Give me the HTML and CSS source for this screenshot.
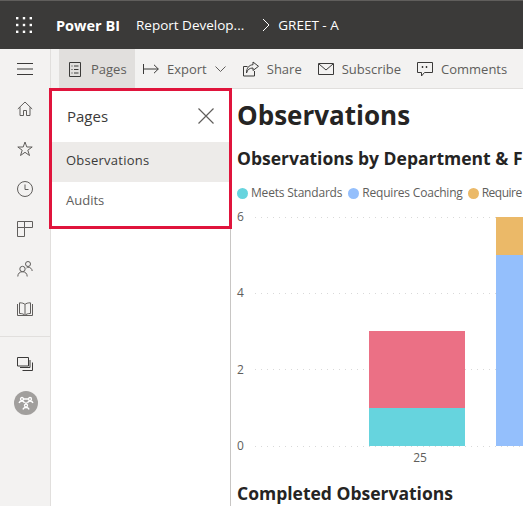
FILE: index.html
```html
<!DOCTYPE html>
<html lang="en">
<head>
  <meta charset="UTF-8" />
  <title>Power BI - GREET - A</title>
  <link rel="stylesheet" href="styles.css">
</head>
<body>
  <header class="topbar">
    <svg class="waffle" width="16" height="16" viewBox="0 0 16 16" fill="#fff">
      <rect x="0" y="0" width="2.4" height="2.4"/><rect x="6.8" y="0" width="2.4" height="2.4"/><rect x="13.6" y="0" width="2.4" height="2.4"/>
      <rect x="0" y="6.8" width="2.4" height="2.4"/><rect x="6.8" y="6.8" width="2.4" height="2.4"/><rect x="13.6" y="6.8" width="2.4" height="2.4"/>
      <rect x="0" y="13.6" width="2.4" height="2.4"/><rect x="6.8" y="13.6" width="2.4" height="2.4"/><rect x="13.6" y="13.6" width="2.4" height="2.4"/>
    </svg>
    <span class="brand">Power BI</span>
    <span class="crumb">Report Develop...</span>
    <svg class="crumb-sep" width="8" height="14" viewBox="0 0 8 14" fill="none" stroke="#fff"><path d="M1 1l6 6-6 6"/></svg>
    <span class="crumb">GREET - A</span>
  </header>

  <div class="layout">
    <nav class="sidenav">
      <div class="nav-item">
        <svg width="16" height="12" viewBox="0 0 16 12" stroke="#3b3a39" fill="none"><path d="M0 .5h16M0 6h16M0 11.5h16"/></svg>
      </div>
      <div class="nav-item">
        <svg width="16" height="16" viewBox="0 0 16 16" stroke="#605e5c" fill="none"><path d="M.8 8L8 1l7.2 7M3 6.2v8.3h3.5v-5h3v5H13V6.2"/></svg>
      </div>
      <div class="nav-item">
        <svg width="16" height="16" viewBox="0 0 16 16" stroke="#605e5c" fill="none"><path d="M8 1l1.8 5h5.4l-4.4 3.2 1.7 5.3L8 11.3l-4.5 3.2 1.7-5.3L.8 6h5.4z"/></svg>
      </div>
      <div class="nav-item">
        <svg width="16" height="16" viewBox="0 0 16 16" stroke="#605e5c" fill="none"><circle cx="8" cy="8" r="7.5"/><path d="M8 3.5V8.500h3.500"/></svg>
      </div>
      <div class="nav-item">
        <svg width="16" height="16" viewBox="0 0 16 16" stroke="#605e5c" fill="none"><path d="M.5.500h15v6h-8v9h-7zM.5 6.500h7M7.500.5v6"/></svg>
      </div>
      <div class="nav-item">
        <svg width="16" height="16" viewBox="0 0 16 16" stroke="#605e5c" fill="none"><circle cx="5.500" cy="8" r="2.700"/><path d="M.8 15.500c0-3 2-4.800 4.700-4.800s4.700 1.800 4.700 4.800"/><circle cx="11" cy="3" r="2.500"/><path d="M9.500 7c.5-.6 1-.8 1.500-.8 2.200 0 4 1.500 4.200 3.800"/></svg>
      </div>
      <div class="nav-item">
        <svg width="16" height="14" viewBox="0 0 16 14" stroke="#605e5c" fill="none"><path d="M.5 2v11.500h15V2M8 2.500v11M2.500 11.500V.8c2.500 0 4.500.5 5.500 1.700 1-1.200 3-1.700 5.500-1.700v10.700c-2.500 0-4.500.5-5.500 2-1-1.500-3-2-5.500-2z"/></svg>
      </div>
      <div class="nav-divider"></div>
      <div class="nav-item">
        <svg width="16" height="14" viewBox="0 0 16 14" stroke="#3b3a39" fill="none"><path d="M.5.500h11v8.500H.5zM13 3v7.500H3M15.500 5.500v8H5.500"/></svg>
      </div>
      <div class="nav-item">
        <div class="avatar">
          <svg width="16" height="14" viewBox="0 0 16 14" stroke="#fff" stroke-width="1.300" fill="none"><circle cx="4" cy="3" r="1.500"/><circle cx="12" cy="3" r="1.500"/><path d="M5.500 3h5M1 7c.5-1.500 1.500-2 3-2s2 .5 2.500 2M9.500 7c.5-1.500 1.500-2 2.500-2 1.500 0 2.500.5 3 2M8 6v2"/><circle cx="8" cy="9.500" r="1.500"/><path d="M5 13.500c.3-1.500 1.500-2 3-2s2.700.5 3 2"/></svg>
        </div>
      </div>
    </nav>

    <div class="main">
      <div class="commandbar">
        <button class="cmd cmd-active">
          <svg width="12" height="15" viewBox="0 0 12 15" stroke="#3b3a39" fill="none"><path d="M.5.500h11v14H.5zM2.500 4h1M5 4h4.500M2.500 7.500h1M5 7.500h4.500M2.500 11h1M5 11h4.500"/></svg>
          <span>Pages</span>
        </button>
        <button class="cmd">
          <svg width="16" height="10" viewBox="0 0 16 10" stroke="#3b3a39" fill="none"><path d="M.5 0v10M1 5h14.300M11 .8L15.300 5 11 9.200"/></svg>
          <span>Export</span>
          <svg class="chev" width="11" height="6" viewBox="0 0 11 6" stroke="#605e5c" fill="none"><path d="M.5.500l5 5 5-5"/></svg>
        </button>
        <button class="cmd">
          <svg width="16" height="16" viewBox="0 0 16 16" stroke="#3b3a39" fill="none"><path d="M11.500 10v5H.5V5.500h4M10 1l5.500 4.300L10 9.500V7C6.500 7 4.500 8.500 3.500 12c0-5 2.500-8 6.500-8.300z"/></svg>
          <span>Share</span>
        </button>
        <button class="cmd">
          <svg width="16" height="12" viewBox="0 0 16 12" stroke="#3b3a39" fill="none"><path d="M.5.500h15v11H.5zM1 1l7 6 7-6"/></svg>
          <span>Subscribe</span>
        </button>
        <button class="cmd">
          <svg width="16" height="15" viewBox="0 0 16 15" stroke="#3b3a39" fill="none"><path d="M.5.500h15v10H7.500l-3 3.500v-3.500h-4z"/><path d="M5.500 4v2M9.500 4v2" stroke-width="1.400"/></svg>
          <span>Comments</span>
        </button>
      </div>

      <div class="workspace">
        <aside class="pages-panel">
          <div class="panel-head">
            <span class="panel-title">Pages</span>
            <svg width="16" height="16" viewBox="0 0 16 16" stroke="#605e5c" stroke-width="1.200" fill="none"><path d="M.5.500l15 15M15.500.5L.5 15.500"/></svg>
          </div>
          <div class="page-item page-item-active">Observations</div>
          <div class="page-item">Audits</div>
        </aside>

        <section class="report">
          <h1>Observations</h1>
          <h2 class="chart-title">Observations by Department &amp; F</h2>
          <div class="legend">
            <span class="legend-item"><i class="dot dot-cyan"></i>Meets Standards</span>
            <span class="legend-item"><i class="dot dot-blue"></i>Requires Coaching</span>
            <span class="legend-item legend-last"><i class="dot dot-orange"></i>Require</span>
          </div>
          <svg class="chart" width="292" height="260" viewBox="0 -4 292 260">
            <g class="grid">
              <path d="M24 7.500H292M24 83.500H292M24 159.500H292M24 236.500H292"/>
            </g>
            <g class="ticks">
              <text x="6" y="11">6</text>
              <text x="6" y="87">4</text>
              <text x="6" y="164">2</text>
              <text x="6" y="240">0</text>
              <text x="189" y="252" text-anchor="middle">25</text>
            </g>
            <rect x="138" y="121" width="96" height="77" fill="#eb7085"/>
            <rect x="138" y="198" width="96" height="38" fill="#66d4de"/>
            <rect x="265" y="7" width="27" height="38" fill="#ebb968"/>
            <rect x="265" y="45" width="27" height="191" fill="#94bffc"/>
          </svg>
          <h2 class="completed">Completed Observations</h2>
        </section>
      </div>
    </div>
  </div>

  <div class="highlight"></div>
</body>
</html>
```

FILE: styles.css
```css
* {
  box-sizing: border-box;
}

html, body {
  height: 100%;
}

body {
  margin: 0;
  overflow: hidden;
  position: relative;
  font-family: "Open Sans", "Noto Sans", sans-serif;
  color: #323130;
  background-color: white;
}

.topbar {
  height: 49px;
  display: flex;
  align-items: center;
  padding-left: 16px;
  background-color: #3b3a39;
  border-top: 1px solid #605e5c;
  color: white;
  white-space: nowrap;
}

.waffle {
  margin-right: 24px;
}

.brand {
  font-size: 14.5px;
  font-weight: 700;
  margin-right: 16px;
}

.crumb {
  font-size: 13.5px;
}

.crumb-sep {
  margin: 0 8px 0 18px;
}

.layout {
  display: flex;
  height: 457px;
}

.sidenav {
  width: 51px;
  flex: none;
  background-color: #f3f2f1;
  border-right: 1px solid #e1dfdd;
}

.nav-item {
  height: 40px;
  display: flex;
  align-items: center;
  justify-content: center;
}

.nav-divider {
  height: 1px;
  margin: 7px 0 7px;
  background-color: #e1dfdd;
}

.avatar {
  width: 24px;
  height: 24px;
  margin: -2px 0 0 2px;
  border-radius: 50%;
  background-color: #a19f9d;
  display: flex;
  align-items: center;
  justify-content: center;
}

.main {
  flex: 1;
  min-width: 0;
  display: flex;
  flex-direction: column;
}

.commandbar {
  height: 40px;
  flex: none;
  display: flex;
  padding-left: 8px;
  background-color: #f3f2f1;
  border-bottom: 1px solid #e1dfdd;
  white-space: nowrap;
}

.cmd {
  height: 40px;
  display: flex;
  align-items: center;
  gap: 8px;
  padding: 0 8px;
  border: 0;
  background: none;
  font-family: inherit;
  font-size: 13px;
  color: #605e5c;
}

.cmd-active {
  width: 76px;
  padding-left: 10px;
  gap: 10px;
  background-color: #e1dfdd;
}

.chev {
  margin-right: 1px;
}

.workspace {
  flex: 1;
  display: flex;
  min-height: 0;
}

.pages-panel {
  width: 180px;
  flex: none;
  border-right: 1px solid #c8c6c4;
}

.panel-head {
  height: 53px;
  display: flex;
  align-items: center;
  justify-content: space-between;
  padding: 1px 16px 0;
}

.panel-title {
  font-size: 15px;
  color: #3b3a39;
}

.page-item {
  height: 40px;
  line-height: 37px;
  padding-left: 15px;
  font-size: 13px;
  color: #605e5c;
}

.page-item-active {
  background-color: #edebe9;
  color: #3b3a39;
  font-weight: 500;
  letter-spacing: 0.25px;
}

.report {
  flex: 1;
  min-width: 0;
  padding-left: 6px;
  white-space: nowrap;
  overflow: hidden;
}

h1 {
  margin: 8px 0 0;
  font-size: 26px;
  line-height: 36px;
  font-weight: 700;
  color: #252423;
}

h2 {
  margin: 0;
  font-size: 17.5px;
  line-height: 24px;
  font-weight: 700;
  color: #252423;
}

.chart-title {
  margin-top: 13px;
}

.legend {
  display: flex;
  gap: 6px;
  margin-top: 15px;
  height: 16px;
  font-size: 12px;
  letter-spacing: -0.2px;
  line-height: 16px;
  color: #605e5c;
}

.legend-item {
  display: flex;
  align-items: center;
  gap: 3px;
  flex: none;
}

.legend-last {
  margin-left: -1px;
  letter-spacing: -0.5px;
}

.dot {
  width: 11px;
  height: 11px;
  border-radius: 50%;
}

.dot-cyan {
  background-color: #66d4de;
}

.dot-blue {
  background-color: #94bffc;
}

.dot-orange {
  background-color: #ebb968;
}

.chart {
  display: block;
  margin-left: -6px;
  margin-top: 5px;
}

.grid path {
  fill: none;
  stroke: #d9d9d9;
  stroke-width: 1;
  stroke-dasharray: 1 5;
}

.ticks text {
  font-size: 12px;
  fill: #605e5c;
  font-family: "Open Sans", "Noto Sans", sans-serif;
}

.completed {
  margin-top: 15px;
}

.highlight {
  position: absolute;
  left: 49px;
  top: 88px;
  width: 183px;
  height: 141px;
  border: 3px solid #e0143c;
}
```
